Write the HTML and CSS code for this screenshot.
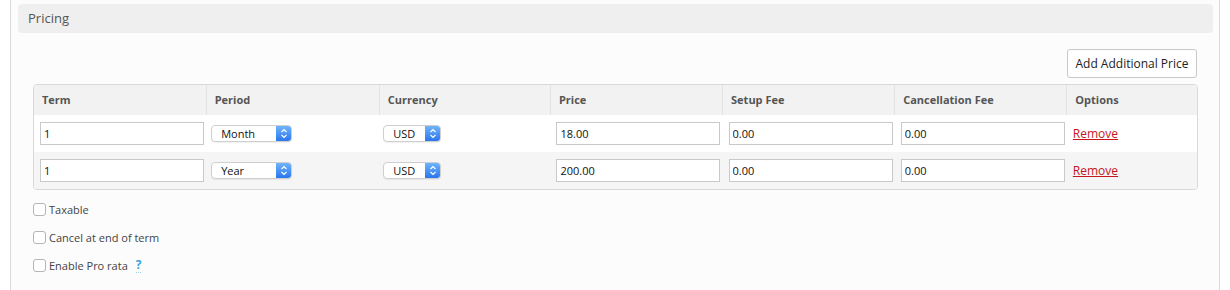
FILE: index.html
```html
<!DOCTYPE html>
<html lang="en">
<head>
<meta charset="utf-8">
<title>Pricing</title>
<link rel="stylesheet" href="styles.css">
</head>
<body>
<div class="panel">
  <div class="panel-title">Pricing</div>
  <div class="content">
    <div class="toolbar">
      <button class="btn" type="button">Add Additional Price</button>
    </div>
    <div class="table-wrap">
      <table class="prices">
        <colgroup>
          <col class="c-term"><col class="c-period"><col class="c-cur"><col class="c-price"><col class="c-setup"><col class="c-cancel"><col class="c-opt">
        </colgroup>
        <thead>
          <tr>
            <th>Term</th><th>Period</th><th>Currency</th><th>Price</th><th>Setup Fee</th><th>Cancellation Fee</th><th>Options</th>
          </tr>
        </thead>
        <tbody>
          <tr>
            <td><input class="field" type="text" value="1"></td>
            <td><div class="select sel-period"><span class="sel-text">Month</span><span class="sel-btn"><svg width="8" height="11" viewBox="0 0 8 11"><path d="M1.5 4 L4 1.5 L6.5 4 M1.5 7 L4 9.5 L6.5 7" fill="none" stroke="#fff" stroke-width="1.2"/></svg></span></div></td>
            <td><div class="select sel-cur"><span class="sel-text">USD</span><span class="sel-btn"><svg width="8" height="11" viewBox="0 0 8 11"><path d="M1.5 4 L4 1.5 L6.5 4 M1.5 7 L4 9.5 L6.5 7" fill="none" stroke="#fff" stroke-width="1.2"/></svg></span></div></td>
            <td><input class="field" type="text" value="18.00"></td>
            <td><input class="field" type="text" value="0.00"></td>
            <td><input class="field" type="text" value="0.00"></td>
            <td><a class="remove" href="#">Remove</a></td>
          </tr>
          <tr class="alt">
            <td><input class="field" type="text" value="1"></td>
            <td><div class="select sel-period"><span class="sel-text">Year</span><span class="sel-btn"><svg width="8" height="11" viewBox="0 0 8 11"><path d="M1.5 4 L4 1.5 L6.5 4 M1.5 7 L4 9.5 L6.5 7" fill="none" stroke="#fff" stroke-width="1.2"/></svg></span></div></td>
            <td><div class="select sel-cur"><span class="sel-text">USD</span><span class="sel-btn"><svg width="8" height="11" viewBox="0 0 8 11"><path d="M1.5 4 L4 1.5 L6.5 4 M1.5 7 L4 9.5 L6.5 7" fill="none" stroke="#fff" stroke-width="1.2"/></svg></span></div></td>
            <td><input class="field" type="text" value="200.00"></td>
            <td><input class="field" type="text" value="0.00"></td>
            <td><input class="field" type="text" value="0.00"></td>
            <td><a class="remove" href="#">Remove</a></td>
          </tr>
        </tbody>
      </table>
    </div>
    <div class="checks">
      <label class="check"><input type="checkbox"><span>Taxable</span></label>
      <label class="check"><input type="checkbox"><span>Cancel at end of term</span></label>
      <label class="check"><input type="checkbox"><span>Enable Pro rata</span><span class="help">?</span></label>
    </div>
  </div>
</div>
</body>
</html>
```

FILE: styles.css
```css
* { box-sizing: border-box; }
html, body { margin: 0; padding: 0; background: #fff; }
body {
  font-family: "Open Sans", "Liberation Sans", sans-serif;
  color: #333;
}
.panel {
  margin-left: 10px;
  width: 1210px;
  height: 290px;
  border-left: 1px solid #dadada;
  border-right: 1px solid #dadada;
  background: #fcfcfc;
  padding: 4px 6px 0 7px;
}
.panel-title {
  height: 29px;
  background: #efefef;
  border-radius: 4px;
  padding-left: 10px;
  font-size: 13px;
  line-height: 28px;
  color: #555;
}
.content {
  padding: 0 15px;
}
.toolbar {
  display: flex;
  justify-content: flex-end;
  padding-top: 16px;
  padding-right: 1px;
}
.btn {
  height: 29px;
  width: 130px;
  padding: 0;
  background: #fff;
  border: 1px solid #c8c8c8;
  border-radius: 3px;
  font-family: inherit;
  font-size: 12px;
  color: #222;
}
.table-wrap {
  margin-top: 6px;
  border: 1px solid #d9d9d9;
  border-radius: 4px;
  overflow: hidden;
}
.prices {
  width: 100%;
  border-collapse: collapse;
  table-layout: fixed;
}
.c-term { width: 172px; }
.c-period { width: 173px; }
.c-cur { width: 171px; }
.c-price { width: 172px; }
.c-setup { width: 172px; }
.c-cancel { width: 172px; }
.c-opt { width: 130px; }
.prices th {
  height: 30px;
  background: #f2f2f2;
  text-align: left;
  font-size: 11px;
  font-weight: 700;
  line-height: 28px;
  color: #555;
  padding: 0 0 0 8px;
  border-left: 1px solid #e2e2e2;
}
.prices th:first-child { border-left: none; }
.prices td {
  height: 37px;
  padding: 0 0 0 6px;
  background: #fff;
  vertical-align: middle;
}
.prices tr.alt td { background: #f5f5f5; }
.field {
  display: block;
  width: 164px;
  height: 23px;
  border: 1px solid #c9c9c9;
  background: #fff;
  padding: 0 3px;
  font-family: inherit;
  font-size: 11px;
  color: #111;
  outline: none;
}
.select {
  display: flex;
  align-items: stretch;
  height: 17px;
  border: 1px solid #cfcfcf;
  border-radius: 4px;
  background: #fff;
  box-shadow: 0 1px 1px rgba(0,0,0,0.06);
  overflow: hidden;
  margin-left: -1px;
}
.sel-period { width: 81px; }
.sel-cur { width: 58px; margin-left: -2px; }
.sel-text {
  flex: 1;
  padding-left: 9px;
  font-size: 11px;
  line-height: 15px;
  color: #111;
}
.sel-btn {
  width: 15px;
  display: flex;
  align-items: center;
  justify-content: center;
  background: linear-gradient(#6fb4fb, #2a76ec);
}
.sel-btn svg { display: block; }
.remove {
  display: block;
  font-size: 12px;
  line-height: 16px;
  margin-top: 0;
  color: #c4161c;
  text-decoration: underline;
}
.checks {
  padding-top: 5px;
}
.check {
  display: flex;
  align-items: center;
  height: 28px;
  font-size: 11px;
  color: #444;
}
.check input {
  appearance: none;
  -webkit-appearance: none;
  width: 13px;
  height: 13px;
  margin: 0 3px 0 0;
  border: 1px solid #b5b5b5;
  border-radius: 3px;
  background: #fff;
}
.help {
  margin-left: 8px;
  font-weight: 700;
  font-size: 12px;
  color: #3ba5dc;
  border-bottom: 1px dotted #9fd0ea;
  line-height: 14px;
}
```
